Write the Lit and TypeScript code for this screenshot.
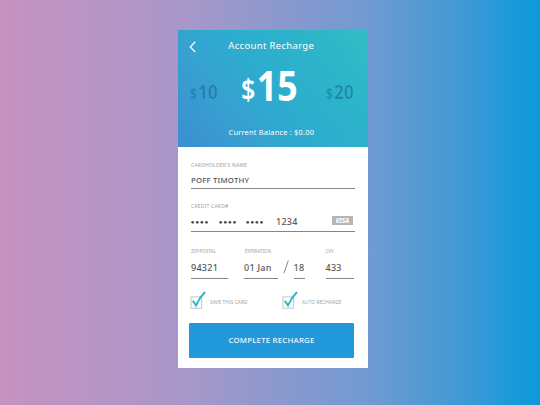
import { LitElement, html, css, svg } from "lit";
import { customElement, property } from "lit/decorators.js";

@customElement("check-option")
class CheckOption extends LitElement {
  @property() label = "";
  static styles = css`
    :host { display: flex; height: 20px; }
    svg { display: block; width: 17px; height: 20px; flex: none; }
    span { margin-left: 3.5px; padding-top: 8px; font-size: 4.7px; line-height: 8px; letter-spacing: 0.12px; color: #a0a0a0; white-space: nowrap; }
  `;
  render() {
    return html`
      <svg viewBox="0 0 17 20" fill="none">
        <rect x="1" y="6.9" width="10.7" height="11.3" stroke="#bdbdbd" stroke-width="0.9" />
        <path d="M2.8 10.8L6 15.4Q9.5 7.5 15 2" stroke="#2bb8cc" stroke-width="2" />
      </svg>
      <span>${this.label}</span>`;
  }
}

@customElement("app-root")
class AppRoot extends LitElement {
  static styles = css`
    * { box-sizing: border-box; }
    :host {
      box-sizing: border-box; display: block; width: 540px; height: 405px; overflow: hidden;
      padding: 29.5px 0 0 178px;
      font-family: "Noto Sans", "Open Sans", sans-serif;
      background: linear-gradient(90deg, #c692c0 0%, #a897c9 35%, #8c99ce 51%, #6f9ad2 69%, #4f9ad4 80%, #3499d6 89%, #1a9ad9 94.5%, #0f99d8 100%);
    }
    .card { width: 189.7px; height: 338.5px; background: #fff; display: flex; flex-direction: column; }
    .head {
      height: 117px; flex: none; color: #fff; padding-top: 9.5px;
      background: linear-gradient(52deg, #3b8fd0 0%, #37a0d0 28%, #2daccf 48%, #2cb4ca 75%, #34bcc5 100%);
    }
    .bar { display: flex; height: 16px; }
    .back { width: 8px; height: 12px; margin: 2.2px 0 0 10.8px; flex: none; }
    .title { margin: -0.5px 0 0 31.5px; font-size: 9.5px; line-height: 13px; letter-spacing: 0.33px; white-space: nowrap; }
    .amounts { display: flex; height: 72px; align-items: flex-start; }
    .amount { display: flex; align-items: baseline; white-space: nowrap; transform-origin: 0 0; transform: scaleX(0.85); }
    .side { width: 0; color: rgba(20, 112, 150, 0.6); font-size: 19.5px; line-height: 24px; font-weight: 600; letter-spacing: 0.4px; }
    .side i { font-style: normal; font-size: 14px; font-weight: 500; margin-right: 1.2px; }
    .ten { margin: 25px 0 0 12px; }
    .main { width: 0; margin: 5px 0 0 51px; font-size: 42px; line-height: 50px; font-weight: 700; }
    .main i { font-style: normal; font-size: 29.5px; font-weight: 600; margin-right: 1.8px; position: relative; top: -1px; }
    .twenty { margin: 25px 0 0 85px; }
    .balance { margin: 0 0 0 50.5px; font-size: 7.4px; line-height: 10px; letter-spacing: 0.22px; white-space: nowrap; }
    .form { padding: 14.5px 13.2px 0 13px; color: #565656; }
    .label { display: block; height: 8px; font-size: 5px; line-height: 8px; letter-spacing: 0.22px; color: #a0a0a0; white-space: nowrap; }
    .line { display: block; height: 1px; background: #858585; }
    .value { display: flex; font-size: 9px; line-height: 12px; height: 12px; letter-spacing: 0.27px; font-weight: 500; white-space: nowrap; }
    .name { margin: 4.5px 0 2px; font-size: 7.8px; letter-spacing: 0.18px; }
    .second { margin-top: 13px; }
    .number { height: 21.5px; padding-top: 6px; }
    .dots { width: 18px; height: 12px; margin-right: 9.6px; flex: none; fill: #505050; }
    .digits { margin-left: 2.2px; }
    .visa {
      margin: 0.3px 2px 0 auto; width: 20.5px; height: 9.5px; border-radius: 0.6px; background: #b5b5b5; color: #fff;
      font-size: 6.4px; line-height: 9.5px; font-weight: 800; font-style: italic; letter-spacing: -0.1px; text-align: center;
    }
    .row { display: grid; grid-template-columns: 53px 34px 15.5px 11px 21px 28px; margin-top: 14.5px; }
    .row .label { font-size: 4.4px; letter-spacing: 0.1px; }
    .row .value { margin: 7px 0 4px; }
    .zip .line { width: 37px; }
    .exp .label { padding-left: 1px; }
    .noLabel { padding-top: 8px; }
    .slash { width: 6px; height: 14px; margin: 13px 0 0 5.3px; }
    .checks { display: flex; margin: 11px 0 0 -1.5px; }
    .checks check-option { width: 92px; flex: none; }
    .checks check-option + check-option { width: 70px; }
    .button {
      margin: 13px 0 0 11px; width: 165px; height: 35px; border-radius: 1px; border: 0; padding: 0; background: #2299db; color: #eef8fd;
      font: 500 7.8px/34px "Noto Sans", sans-serif; letter-spacing: 0.23px; text-align: center;
    }
  `;
  dots() {
    return html`<svg class="dots" viewBox="0 0 18 12">${[1.7, 6.3, 10.9, 15.5].map(
      (x) => svg`<circle cx=${x} cy="6.3" r="1.4" />`
    )}</svg>`;
  }
  render() {
    return html`
      <main class="card">
        <header class="head">
          <div class="bar">
            <svg class="back" viewBox="0 0 8 12" fill="none" stroke="#fff" stroke-width="1.3"><path d="M6.3 .8L1.3 5.9L6.3 11.1" /></svg>
            <div class="title">Account Recharge</div>
          </div>
          <div class="amounts">
            <div class="amount side ten"><i>$</i>10</div>
            <div class="amount main"><i>$</i>15</div>
            <div class="amount side twenty"><i>$</i>20</div>
          </div>
          <div class="balance">Current Balance : $0.00</div>
        </header>
        <section class="form">
          <span class="label">CARDHOLDER'S NAME</span>
          <div class="value name">POFF TIMOTHY</div>
          <span class="line"></span>
          <span class="label second">CREDIT CARD#</span>
          <div class="value number">
            ${this.dots()}${this.dots()}${this.dots()}
            <span class="digits">1234</span><span class="visa">VISA</span>
          </div>
          <span class="line"></span>
          <div class="row">
            <div class="zip"><span class="label">ZIP/POSTAL</span><div class="value">94321</div><span class="line"></span></div>
            <div class="exp"><span class="label">EXPIRATION</span><div class="value">01 Jan</div><span class="line"></span></div>
            <svg class="slash" viewBox="0 0 6 14" fill="none" stroke="#666" stroke-width=".8"><path d="M5.3 .5L1 13.2" /></svg>
            <div class="noLabel"><div class="value">18</div><span class="line"></span></div>
            <div></div>
            <div><span class="label">CVV</span><div class="value">433</div><span class="line"></span></div>
          </div>
          <div class="checks">
            <check-option label="SAVE THIS CARD"></check-option>
            <check-option label="AUTO RECHARGE"></check-option>
          </div>
        </section>
        <button class="button">COMPLETE RECHARGE</button>
      </main>`;
  }
}
